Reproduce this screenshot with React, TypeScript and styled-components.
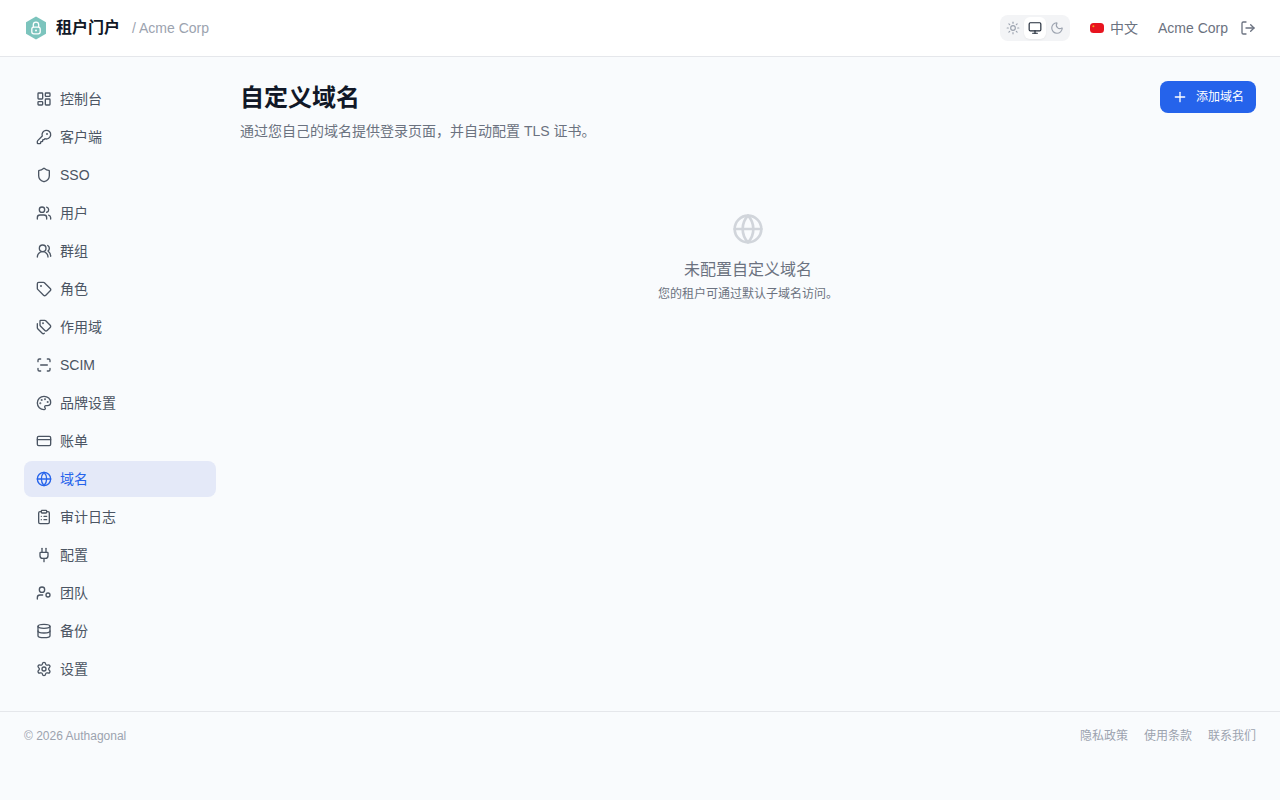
import styled, { createGlobalStyle } from 'styled-components';
import {
  CreditCard,
  Database,
  Globe,
  KeyRound,
  LayoutDashboard,
  LogOut,
  Monitor,
  Moon,
  Palette,
  Plug,
  Plus,
  ClipboardList,
  ScanLine,
  Settings,
  Shield,
  Sun,
  Tag,
  Tags,
  Users,
  UsersRound,
} from 'lucide-react';

const GlobalStyle = createGlobalStyle`
  html, body {
    margin: 0;
    padding: 0;
    background: #f9fbfd;
    font-family: "Liberation Sans", "Noto Sans CJK SC", sans-serif;
  }
  * { box-sizing: border-box; }
`;

const Page = styled.div`
  min-height: 800px;
  display: flex;
  flex-direction: column;
`;

const Header = styled.header`
  height: 57px;
  background: #fff;
  border-bottom: 1px solid #e5e7eb;
  padding: 0 24px;
  display: flex;
  align-items: center;
  justify-content: space-between;
`;

const Brand = styled.div`
  display: flex;
  align-items: center;
`;

const BrandName = styled.span`
  margin-left: 8px;
  font-size: 16px;
  line-height: 24px;
  font-weight: 700;
  color: #111827;
`;

const Tenant = styled.span`
  margin-left: 12px;
  font-size: 14px;
  line-height: 20px;
  color: #9ca3af;
`;

const HeaderRight = styled.div`
  display: flex;
  align-items: center;
`;

const ThemeSwitch = styled.div`
  display: flex;
  padding: 2px;
  border-radius: 8px;
  background: #f3f4f6;
`;

const ThemeButton = styled.div<{ $active?: boolean }>`
  width: 22px;
  height: 22px;
  display: flex;
  align-items: center;
  justify-content: center;
  border-radius: 6px;
  color: ${(p) => (p.$active ? '#1f2937' : '#9ca3af')};
  background: ${(p) => (p.$active ? '#fff' : 'transparent')};
  box-shadow: ${(p) => (p.$active ? '0 1px 2px rgba(0, 0, 0, 0.05)' : 'none')};
`;

const Lang = styled.div`
  margin-left: 20px;
  display: flex;
  align-items: center;
  gap: 6px;
  font-size: 14px;
  line-height: 20px;
  color: #6b7280;
`;

const UserName = styled.span`
  margin-left: 20px;
  font-size: 14px;
  line-height: 20px;
  color: #6b7280;
`;

const LogoutButton = styled.div`
  margin-left: 12px;
  display: flex;
  color: #6b7280;
`;

const Body = styled.div`
  flex: 1;
  display: flex;
  padding: 24px;
  gap: 24px;
`;

const Sidebar = styled.nav`
  width: 192px;
  flex-shrink: 0;
  display: flex;
  flex-direction: column;
  gap: 2px;
`;

const NavItem = styled.div<{ $active?: boolean }>`
  height: 36px;
  padding: 0 12px;
  display: flex;
  align-items: center;
  gap: 8px;
  border-radius: 8px;
  font-size: 14px;
  line-height: 20px;
  color: ${(p) => (p.$active ? '#2563eb' : '#4b5563')};
  background: ${(p) => (p.$active ? '#e4e9f8' : 'transparent')};
`;

const Main = styled.main`
  flex: 1;
`;

const TitleRow = styled.div`
  display: flex;
  align-items: flex-start;
  justify-content: space-between;
`;

const Title = styled.h1`
  margin: 0;
  padding-top: 1px;
  font-size: 24px;
  line-height: 32px;
  font-weight: 700;
  color: #111827;
`;

const Subtitle = styled.p`
  margin: 7px 0 0;
  font-size: 14px;
  line-height: 20px;
  color: #6b7280;
`;

const AddButton = styled.div`
  height: 32px;
  padding: 0 12px;
  display: flex;
  align-items: center;
  gap: 8px;
  border-radius: 8px;
  background: #2563eb;
  color: #fff;
  font-size: 12px;
  line-height: 16px;
`;

const Empty = styled.div`
  margin-top: 72px;
  display: flex;
  flex-direction: column;
  align-items: center;
  color: #d1d5db;
`;

const EmptyTitle = styled.div`
  margin-top: 13px;
  font-size: 16px;
  line-height: 24px;
  color: #6b7280;
`;

const EmptyText = styled.div`
  margin-top: 4px;
  font-size: 12px;
  line-height: 16px;
  color: #6b7280;
`;

const Footer = styled.footer`
  height: 89px;
  border-top: 1px solid #e5e7eb;
  padding: 16px 24px;
  display: flex;
  justify-content: space-between;
  font-size: 12px;
  line-height: 16px;
  color: #9ca3af;
`;

const FooterLinks = styled.div`
  display: flex;
  gap: 16px;
`;

const Logo = () => (
  <svg width="24" height="24" viewBox="0 0 24 24">
    <path d="M12 .5 22 6.2v11.6l-10 5.7-10-5.7V6.2z" fill="#7cc4bd" />
    <path d="M9.3 11.2V8.8a2.7 2.7 0 0 1 5.4 0v2.4" fill="none" stroke="#fff" strokeWidth="1.3" />
    <rect x="7.8" y="11.2" width="8.4" height="6.6" rx="2" fill="none" stroke="#fff" strokeWidth="1.3" />
    <circle cx="12" cy="14.5" r="1" fill="#fff" />
  </svg>
);

const Flag = () => (
  <svg width="14" height="10" viewBox="0 0 14 10">
    <rect width="14" height="10" rx="3.5" fill="#e8141f" />
    <circle cx="3.4" cy="3.2" r="1" fill="#f4a91c" />
  </svg>
);

const TeamIcon = ({ size, color }: { size: number; color: string }) => (
  <svg
    width={size}
    height={size}
    viewBox="0 0 24 24"
    fill="none"
    stroke={color}
    strokeWidth="2"
    strokeLinecap="round"
    strokeLinejoin="round"
  >
    <path d="M10 15H6a4 4 0 0 0-4 4v2" />
    <circle cx="9" cy="7" r="4" />
    <circle cx="18" cy="15" r="3" />
  </svg>
);

const navItems = [
  { label: '控制台', icon: LayoutDashboard },
  { label: '客户端', icon: KeyRound },
  { label: 'SSO', icon: Shield },
  { label: '用户', icon: Users },
  { label: '群组', icon: UsersRound },
  { label: '角色', icon: Tag },
  { label: '作用域', icon: Tags },
  { label: 'SCIM', icon: ScanLine },
  { label: '品牌设置', icon: Palette },
  { label: '账单', icon: CreditCard },
  { label: '域名', icon: Globe, active: true },
  { label: '审计日志', icon: ClipboardList },
  { label: '配置', icon: Plug },
  { label: '团队', icon: TeamIcon },
  { label: '备份', icon: Database },
  { label: '设置', icon: Settings },
];

export default function App() {
  return (
    <Page>
      <GlobalStyle />
      <Header>
        <Brand>
          <Logo />
          <BrandName>租户门户</BrandName>
          <Tenant>/ Acme Corp</Tenant>
        </Brand>
        <HeaderRight>
          <ThemeSwitch>
            <ThemeButton><Sun size={14} /></ThemeButton>
            <ThemeButton $active><Monitor size={14} /></ThemeButton>
            <ThemeButton><Moon size={14} /></ThemeButton>
          </ThemeSwitch>
          <Lang>
            <Flag />
            中文
          </Lang>
          <UserName>Acme Corp</UserName>
          <LogoutButton><LogOut size={16} /></LogoutButton>
        </HeaderRight>
      </Header>
      <Body>
        <Sidebar>
          {navItems.map(({ label, icon: Icon, active }) => (
            <NavItem key={label} $active={active}>
              <Icon size={16} color={active ? '#2563eb' : '#4b5563'} />
              {label}
            </NavItem>
          ))}
        </Sidebar>
        <Main>
          <TitleRow>
            <div>
              <Title>自定义域名</Title>
              <Subtitle>通过您自己的域名提供登录页面，并自动配置 TLS 证书。</Subtitle>
            </div>
            <AddButton>
              <Plus size={16} />
              添加域名
            </AddButton>
          </TitleRow>
          <Empty>
            <Globe size={32} />
            <EmptyTitle>未配置自定义域名</EmptyTitle>
            <EmptyText>您的租户可通过默认子域名访问。</EmptyText>
          </Empty>
        </Main>
      </Body>
      <Footer>
        <span>© 2026 Authagonal</span>
        <FooterLinks>
          <span>隐私政策</span>
          <span>使用条款</span>
          <span>联系我们</span>
        </FooterLinks>
      </Footer>
    </Page>
  );
}
